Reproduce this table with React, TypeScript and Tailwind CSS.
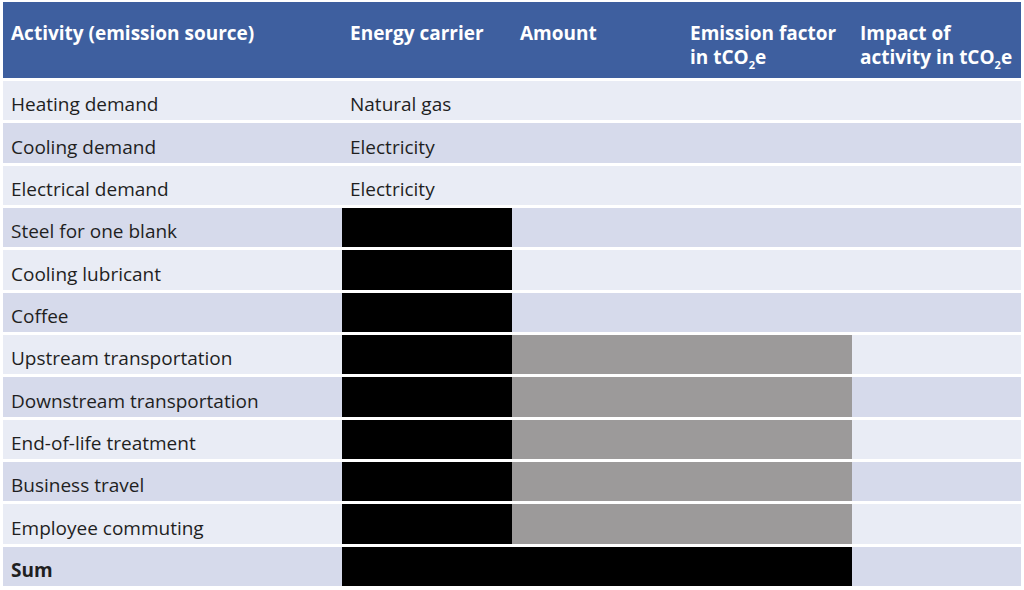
const ROWS: { label: string; carrier?: string; kind: 'text' | 'black' | 'gray' | 'sum' }[] = [
  { label: 'Heating demand', carrier: 'Natural gas', kind: 'text' },
  { label: 'Cooling demand', carrier: 'Electricity', kind: 'text' },
  { label: 'Electrical demand', carrier: 'Electricity', kind: 'text' },
  { label: 'Steel for one blank', kind: 'black' },
  { label: 'Cooling lubricant', kind: 'black' },
  { label: 'Coffee', kind: 'black' },
  { label: 'Upstream transportation', kind: 'gray' },
  { label: 'Downstream transportation', kind: 'gray' },
  { label: 'End-of-life treatment', kind: 'gray' },
  { label: 'Business travel', kind: 'gray' },
  { label: 'Employee commuting', kind: 'gray' },
  { label: 'Sum', kind: 'sum' },
]

function CO2() {
  return (
    <span>
      tCO<span className="text-[11px] relative top-[5px]">2</span>e
    </span>
  )
}

export default function App() {
  return (
    <div
      className="w-[1024px] h-[590px] bg-white pt-[2px] pl-[3px] overflow-hidden text-[#1f1f1f]"
      style={{ fontFamily: '"Open Sans", "Noto Sans", sans-serif' }}
    >
      <div className="w-[1018px]">
        <div className="grid grid-cols-[339px_170px_170px_170px_169px] h-[76px] bg-[#3e5f9f] text-white font-bold text-[19px] leading-[24px] pt-[19px]">
          <div className="pl-2">Activity (emission source)</div>
          <div className="pl-2">Energy carrier</div>
          <div className="pl-2">Amount</div>
          <div className="pl-2">
            Emission factor
            <br />
            in <CO2 />
          </div>
          <div className="pl-2 whitespace-nowrap">
            Impact of
            <br />
            activity in <CO2 />
          </div>
        </div>

        {ROWS.map((row, i) => {
          const bg = i % 2 === 0 ? 'bg-[#e9ecf5]' : 'bg-[#d6daeb]'
          return (
            <div
              key={row.label}
              className={`grid grid-cols-[339px_170px_170px_170px_169px] h-[39.33px] mt-[3px] ${bg} text-[19px]`}
            >
              <div className={`pl-2 flex items-center pt-[8px] ${row.kind === 'sum' ? 'font-bold' : ''}`}>
                {row.label}
              </div>
              {row.kind === 'text' && (
                <>
                  <div className="pl-2 flex items-center pt-[8px]">{row.carrier}</div>
                  <div />
                  <div />
                  <div />
                </>
              )}
              {row.kind === 'black' && (
                <>
                  <div className="bg-black" />
                  <div />
                  <div />
                  <div />
                </>
              )}
              {row.kind === 'gray' && (
                <>
                  <div className="bg-black" />
                  <div className="bg-[#9c9a9a]" />
                  <div className="bg-[#9c9a9a]" />
                  <div />
                </>
              )}
              {row.kind === 'sum' && (
                <>
                  <div className="bg-black col-span-3" />
                  <div />
                </>
              )}
            </div>
          )
        })}
      </div>
    </div>
  )
}
